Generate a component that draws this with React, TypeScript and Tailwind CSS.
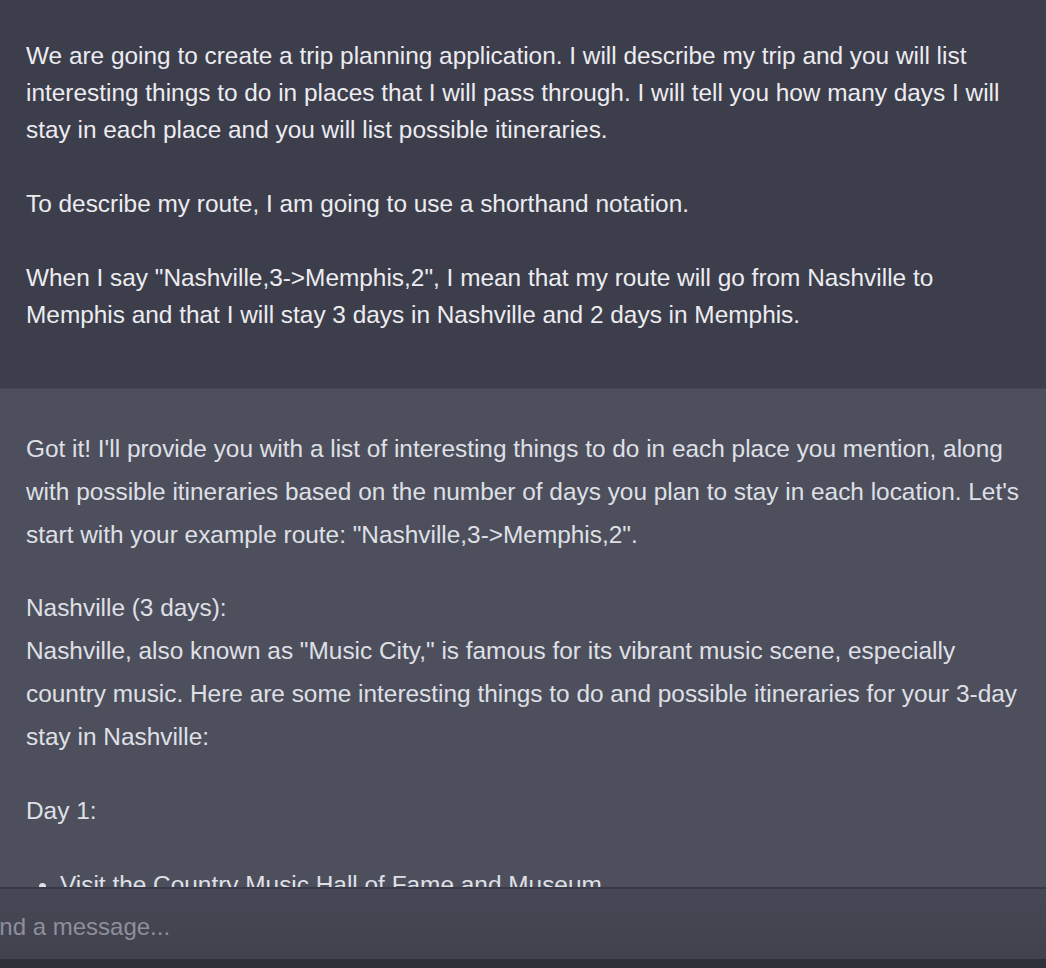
import React from "react";

export default function App() {
  const font = { fontFamily: '"Liberation Sans", Arial, sans-serif' };
  return (
    <div className="w-[1046px] h-[968px] overflow-hidden flex flex-col bg-[#3d3e4b]" style={font}>
      <div className="h-[887px] overflow-hidden flex flex-col">
        <div className="bg-[#3d3e4b] pl-[26px] pr-[12px] pt-[37px] pb-[55px] text-[24.4px] leading-[37px] text-[#ececf1] whitespace-nowrap">
          <p>
            We are going to create a trip planning application. I will describe my trip and you will list
            <br />
            interesting things to do in places that I will pass through. I will tell you how many days I will
            <br />
            stay in each place and you will list possible itineraries.
          </p>
          <p className="mt-[37px]">To describe my route, I am going to use a shorthand notation.</p>
          <p className="mt-[37px]">
            When I say "Nashville,3-&gt;Memphis,2", I mean that my route will go from Nashville to
            <br />
            Memphis and that I will stay 3 days in Nashville and 2 days in Memphis.
          </p>
        </div>
        <div className="flex-1 bg-[#4e4f5d] border-t border-[#464755] pl-[26px] pr-[12px] pt-[38px] text-[24.4px] leading-[43px] text-[#dfe0e6] whitespace-nowrap">
          <p>
            Got it! I'll provide you with a list of interesting things to do in each place you mention, along
            <br />
            with possible itineraries based on the number of days you plan to stay in each location. Let's
            <br />
            start with your example route: "Nashville,3-&gt;Memphis,2".
          </p>
          <p className="mt-[30px]">
            Nashville (3 days):
            <br />
            Nashville, also known as "Music City," is famous for its vibrant music scene, especially
            <br />
            country music. Here are some interesting things to do and possible itineraries for your 3-day
            <br />
            stay in Nashville:
          </p>
          <p className="mt-[31px]">Day 1:</p>
          <ul className="mt-[31px] list-disc pl-[34px]">
            <li>Visit the Country Music Hall of Fame and Museum</li>
          </ul>
        </div>
      </div>
      <div className="border-t-2 border-[#383946] bg-gradient-to-b from-[#474855] to-[#40414d] flex-1 flex flex-col">
        <div className="flex-1 flex items-center pt-[6px]">
          <span className="ml-[-30px] text-[24px] text-[#8e8f9b] whitespace-nowrap">Send a message...</span>
        </div>
        <div className="h-[9px] bg-[#2e2f39]" />
      </div>
    </div>
  );
}
